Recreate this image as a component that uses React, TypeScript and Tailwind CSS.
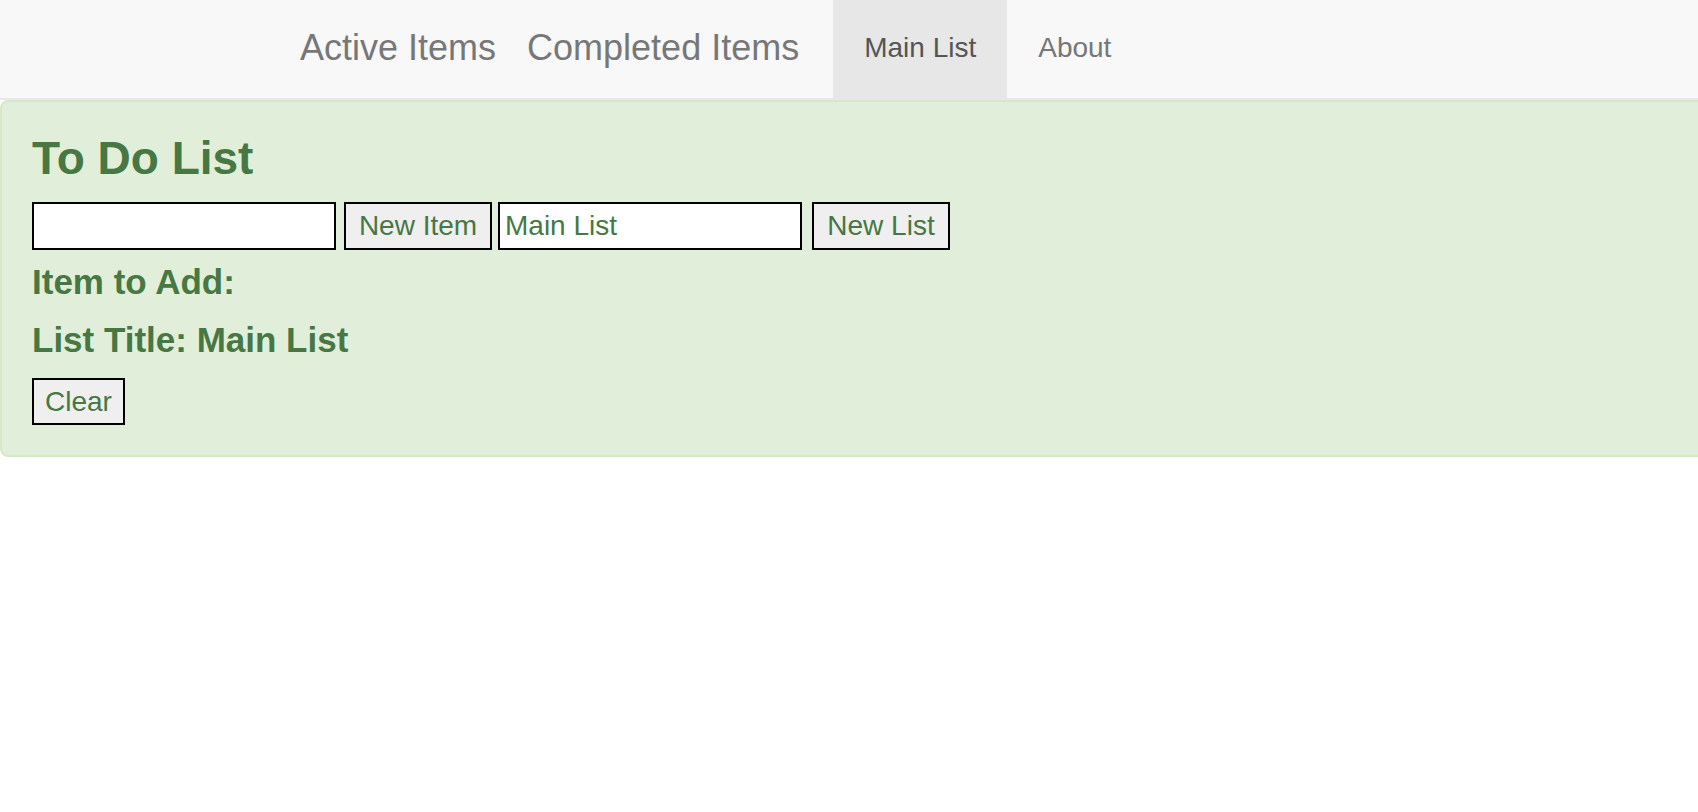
import React, { useState } from "react";

// To Do List page: navbar on top, green alert panel with the list form
export default function App() {
  const [item, setItem] = useState("");
  const [title, setTitle] = useState("Main List");
  const [listTitle, setListTitle] = useState("Main List");

  return (
    <div className="min-h-[812px] overflow-hidden bg-white font-['Liberation_Sans',Arial,sans-serif]">
      <nav className="flex h-[100px] border-b-2 border-[#e7e7e7] bg-[#f8f8f8] pl-[270px]">
        <a className="flex items-center pb-[2px] pl-[30px] text-[36px] text-[#777]">Active Items</a>
        <a className="ml-[31px] flex items-center pb-[2px] text-[36px] text-[#777]">Completed Items</a>
        <ul className="ml-[34px] flex">
          <li className="flex items-center bg-[#e7e7e7] px-[31px] pb-[2px] text-[28px] text-[#555]">Main List</li>
          <li className="flex items-center px-[31px] pb-[2px] text-[28px] text-[#777]">About</li>
        </ul>
      </nav>

      <div className="w-[calc(100%+40px)] rounded-[8px] border-2 border-[#d6e9c6] bg-[#e1efda] p-[30px] text-[#477743]">
        <h3 className="mb-[17px] text-[46px] leading-[53px] font-bold">To Do List</h3>
        <div className="flex h-[48px]">
          <input
            value={item}
            onChange={(e) => setItem(e.target.value)}
            className="h-[48px] w-[304px] border-2 border-black bg-white px-[6px] text-[28px] text-[#477743] outline-none"
          />
          <button className="ml-[8px] h-[48px] w-[148px] border-2 border-black bg-[#efefef] text-[28px] text-[#477743]">
            New Item
          </button>
          <input
            value={title}
            onChange={(e) => setTitle(e.target.value)}
            className="ml-[6px] h-[48px] w-[304px] border-2 border-black bg-white px-[5px] text-[28px] text-[#477743] outline-none"
          />
          <button
            onClick={() => setListTitle(title)}
            className="ml-[10px] h-[48px] w-[138px] border-2 border-black bg-[#efefef] text-[28px] text-[#477743]"
          >
            New List
          </button>
        </div>
        <h4 className="mt-[12px] text-[35px] leading-[40px] font-bold">Item to Add: {item}</h4>
        <h4 className="mt-[18px] text-[35px] leading-[40px] font-bold">List Title: {listTitle}</h4>
        <button
          onClick={() => setItem("")}
          className="mt-[18px] h-[47px] w-[93px] border-2 border-black bg-[#efefef] text-[28px] text-[#477743]"
        >
          Clear
        </button>
      </div>
    </div>
  );
}
